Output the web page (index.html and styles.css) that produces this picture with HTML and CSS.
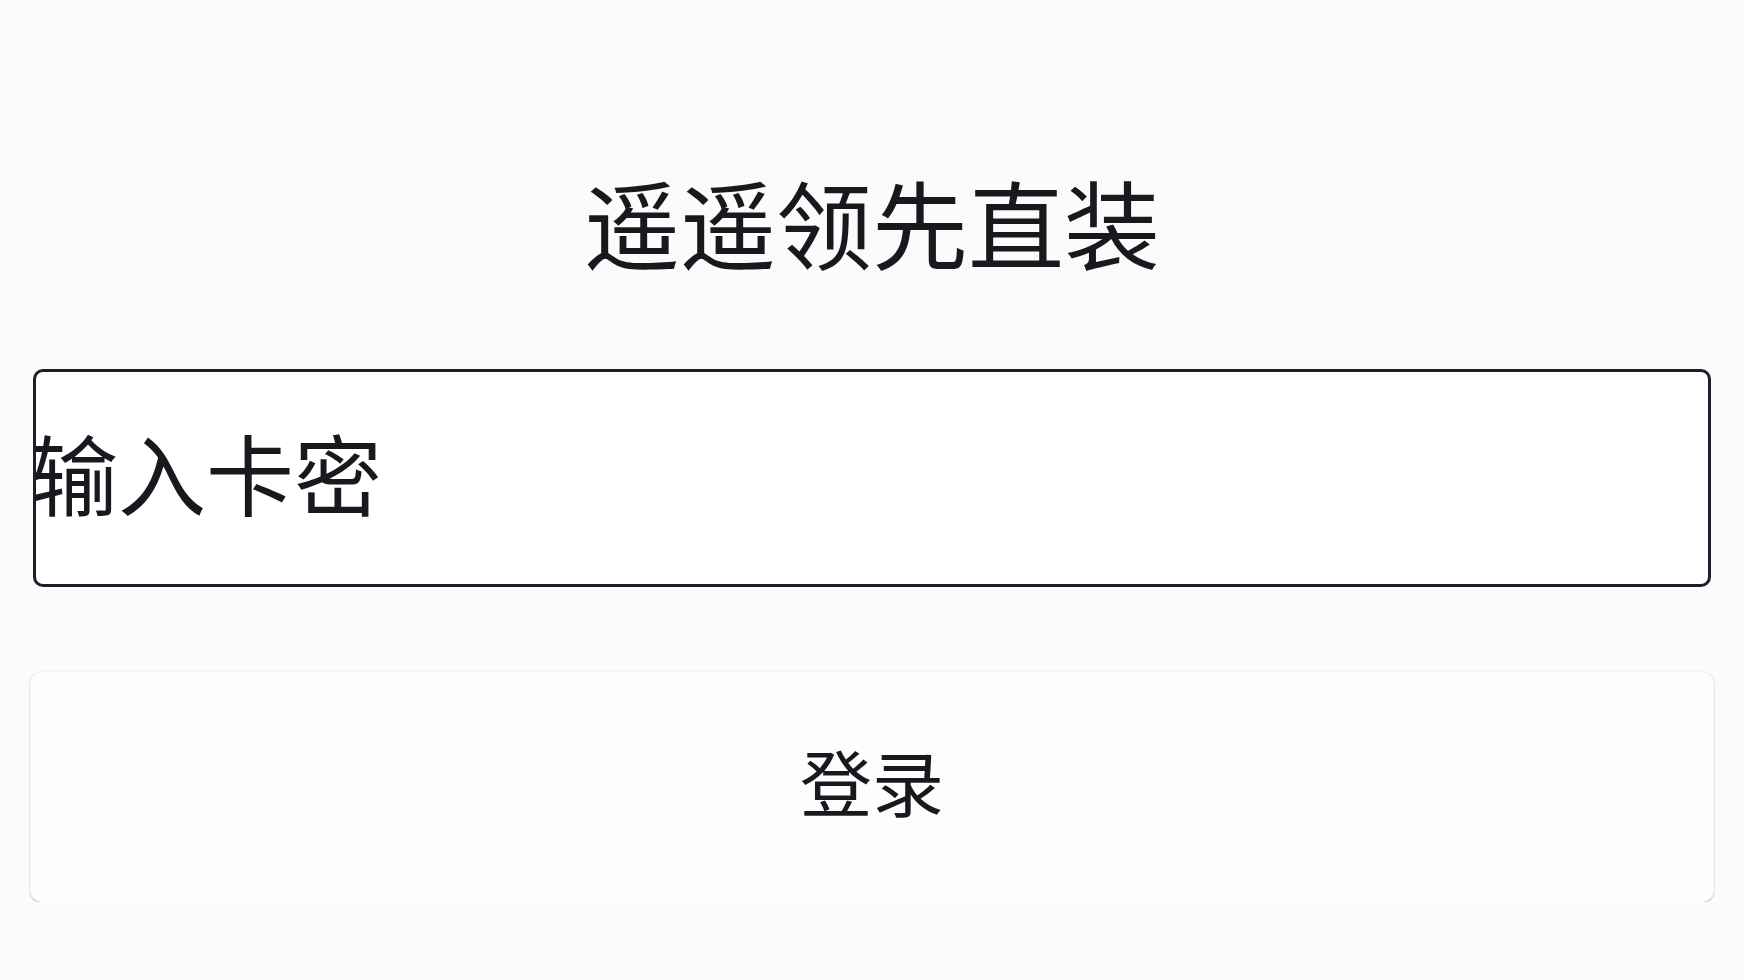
FILE: index.html
```html
<!DOCTYPE html>
<html lang="zh">
<head>
    <meta charset="utf-8">
    <title>遥遥领先直装</title>
    <link rel="stylesheet" href="styles.css">
</head>
<body>
    <div class="page">
        <h1 class="title">遥遥领先直装</h1>
        <input type="password" id="card-key" class="key-input" placeholder="输入卡密">
        <button id="login" type="button" class="login-button">登录</button>
    </div>
</body>
</html>
```

FILE: styles.css
```css
body {
    margin: 0;
    background: #fbfbfb;
    font-family: "Noto Sans CJK SC", "Noto Sans", sans-serif;
    color: #18181e;
}

.page {
    padding: 163px 33px 0;
    display: flex;
    flex-direction: column;
}

.title {
    margin: 0;
    font-size: 96px;
    line-height: 1.2;
    font-weight: 400;
    text-align: center;
    color: #18181e;
}

.key-input {
    margin-top: 91px;
    height: 218px;
    box-sizing: border-box;
    border: 3px solid #1e1e2a;
    border-radius: 10px;
    background: #ffffff;
    padding: 0 0 16px;
    text-indent: -6px;
    font-family: inherit;
    font-size: 88px;
    color: #18181e;
    outline: none;
}

.key-input::placeholder {
    color: #18181e;
    opacity: 1;
}

.login-button {
    margin: 85px -3px 0;
    height: 230px;
    border: none;
    border-radius: 12px;
    background: #fdfdfd;
    padding: 0 0 16px;
    box-shadow: 0 1px 2px rgba(0, 0, 0, 0.25), 0 0 1px rgba(0, 0, 0, 0.18);
    font-family: inherit;
    font-size: 72px;
    color: #18181e;
    cursor: pointer;
}
```
